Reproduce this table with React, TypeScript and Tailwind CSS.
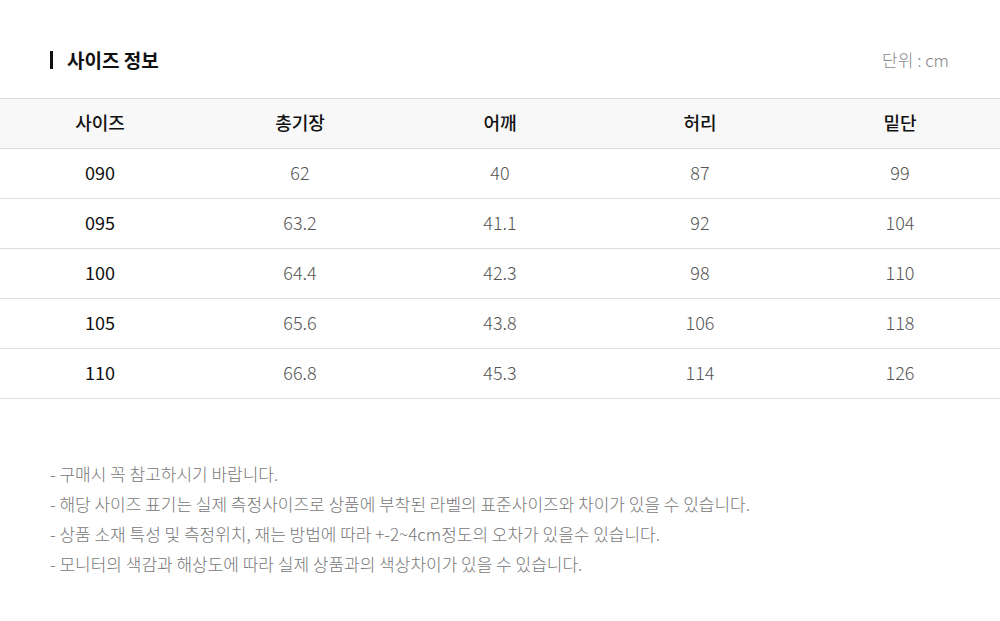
const headers = ['사이즈', '총기장', '어깨', '허리', '밑단'];

const rows = [
  ['090', '62', '40', '87', '99'],
  ['095', '63.2', '41.1', '92', '104'],
  ['100', '64.4', '42.3', '98', '110'],
  ['105', '65.6', '43.8', '106', '118'],
  ['110', '66.8', '45.3', '114', '126'],
];

const notes = [
  '구매시 꼭 참고하시기 바랍니다.',
  '해당 사이즈 표기는 실제 측정사이즈로 상품에 부착된 라벨의 표준사이즈와 차이가 있을 수 있습니다.',
  '상품 소재 특성 및 측정위치, 재는 방법에 따라 +-2~4cm정도의 오차가 있을수 있습니다.',
  '모니터의 색감과 해상도에 따라 실제 상품과의 색상차이가 있을 수 있습니다.',
];

export default function App() {
  return (
    <div
      className="w-[1000px] h-[621px] bg-white"
      style={{ fontFamily: '"Noto Sans CJK KR", "Noto Sans", sans-serif' }}
    >
      <div className="flex items-center justify-between pl-[50px] pr-[51px] pt-[48px] h-[98px] pb-[26px]">
        <div className="flex items-center gap-[14px]">
          <div className="w-[3px] h-[18px] bg-[#111]" />
          <span className="text-[19px] font-bold text-[#111]">사이즈 정보</span>
        </div>
        <span className="text-[17px] font-light text-[#888]">단위 : cm</span>
      </div>

      <div className="border-t border-[#dddddd]">
        <div className="grid grid-cols-5 h-[50px] bg-[#f8f8f8] border-b border-[#dddddd]">
          {headers.map((h) => (
            <div key={h} className="flex items-center justify-center pb-[2px] text-[18px] text-[#111] font-medium">
              {h}
            </div>
          ))}
        </div>
        {rows.map((r) => (
          <div key={r[0]} className="grid grid-cols-5 h-[50px] border-b border-[#dddddd]">
            {r.map((c, i) => (
              <div
                key={i}
                className={
                  i === 0
                    ? 'flex items-center justify-center pb-[2px] text-[18px] text-[#111] font-normal'
                    : 'flex items-center justify-center pb-[2px] text-[18px] text-[#555] font-light'
                }
              >
                {c}
              </div>
            ))}
          </div>
        ))}
      </div>

      <div className="pl-[50px] pt-[60px]">
        {notes.map((n) => (
          <p key={n} className="text-[17px] leading-[30px] font-light text-[#777]">
            - {n}
          </p>
        ))}
      </div>
    </div>
  );
}
